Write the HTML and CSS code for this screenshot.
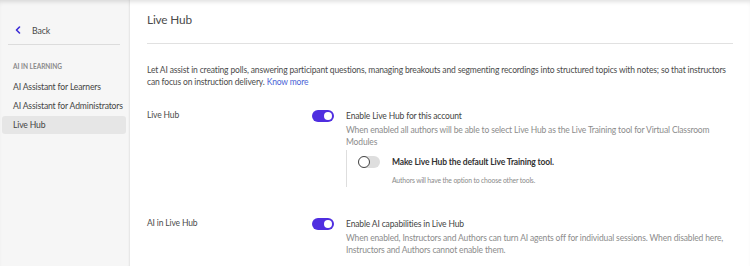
FILE: index.html
```html
<!DOCTYPE html>
<html>
<head lang="en">
<meta charset="UTF-8">
<title>Live Hub</title>
<link rel="stylesheet" href="styles.css">
</head>
<body>
<div class="layout">
  <div class="sidebar">
    <a class="back" href="#">
      <svg width="8" height="8" viewBox="0 0 8 8"><path d="M5.5 1 L2.5 4 L5.5 7" fill="none" stroke="#3b2bd6" stroke-width="1.6" stroke-linecap="round" stroke-linejoin="round"/></svg>
      <span>Back</span>
    </a>
    <div class="side-rule"></div>
    <div class="side-title">AI IN LEARNING</div>
    <ul class="side-list">
      <li>AI Assistant for Learners</li>
      <li>AI Assistant for Administrators</li>
      <li class="active">Live Hub</li>
    </ul>
  </div>

  <div class="main">
    <h1>Live Hub</h1>
    <hr>
    <p class="intro">Let AI assist in creating polls, answering participant questions, managing breakouts and segmenting recordings into structured topics with notes; so that instructors can focus on instruction delivery. <a href="#">Know more</a></p>

    <div class="setting">
      <div class="label">Live Hub</div>
      <div><span class="toggle on"></span></div>
      <div class="body">
        <div class="title">Enable Live Hub for this account</div>
        <div class="desc">When enabled all authors will be able to select Live Hub as the Live Training tool for Virtual Classroom Modules</div>
        <div class="sub">
          <div class="sub-row">
            <span class="toggle off"></span>
            <span class="sub-title">Make Live Hub the default Live Training tool.</span>
          </div>
          <div class="sub-desc">Authors will have the option to choose other tools.</div>
        </div>
      </div>
    </div>

    <div class="setting second">
      <div class="label">AI in Live Hub</div>
      <div><span class="toggle on"></span></div>
      <div class="body">
        <div class="title">Enable AI capabilities in Live Hub</div>
        <div class="desc">When enabled, Instructors and Authors can turn AI agents off for individual sessions. When disabled here, Instructors and Authors cannot enable them.</div>
      </div>
    </div>
  </div>
</div>
</body>
</html>
```

FILE: styles.css
```css
body {
  margin: 0;
  font-family: "Lato", "Noto Sans", sans-serif;
  letter-spacing: -0.15px;
  color: #4b4b4b;
  height: 266px;
  overflow: hidden;
}

.layout {
  display: flex;
  height: 266px;
  box-shadow: inset 0 4px 4px -2px rgba(0, 0, 0, 0.12);
}

.sidebar {
  width: 130px;
  flex-shrink: 0;
  background-color: #f6f6f6;
  box-shadow: inset -2px 0 2px -1px rgba(0, 0, 0, 0.06), inset 0 4px 4px -2px rgba(0, 0, 0, 0.12);
  padding-top: 24px;
  box-sizing: border-box;
}

.back {
  display: flex;
  align-items: center;
  padding-left: 14px;
  height: 12px;
  text-decoration: none;
  color: #4b4b4b;
  font-size: 8.8px;
}

.back span {
  margin-left: 10px;
}

.side-rule {
  height: 1px;
  background-color: #dcdcdc;
  margin: 8px 10px 0 8px;
}

.side-title {
  margin: 18px 0 0 13px;
  font-size: 6.5px;
  font-weight: bold;
  color: #8a8a8a;
  letter-spacing: 0;
}

.side-list {
  list-style-type: none;
  margin: 8px 0 0 0;
  padding: 0;
}

.side-list li {
  font-size: 8.6px;
  color: #444;
  height: 18px;
  line-height: 18px;
  padding-left: 11px;
  margin: 0 4px 1px 2px;
}

.side-list li.active {
  background-color: #e6e6e6;
  border-radius: 3px;
}

.main {
  flex: 1;
  padding: 12px 17px 0 17px;
}

.main h1 {
  margin: 0;
  font-size: 11.8px;
  font-weight: normal;
  line-height: 16px;
  color: #4b4b4b;
}

.main hr {
  border: none;
  height: 1px;
  background-color: #e1e1e1;
  margin: 15px 0 0 0;
}

.intro {
  margin: 20px 0 0 0;
  font-size: 8.5px;
  line-height: 12px;
  color: #4b4b4b;
}

.intro a {
  color: #4a63d6;
  text-decoration: none;
}

.setting {
  display: grid;
  grid-template-columns: 165px 34px 1fr;
  margin-top: 22px;
  font-size: 8.5px;
}

.setting.second {
  margin-top: 31px;
}

.label {
  color: #4b4b4b;
  line-height: 12px;
  margin-top: -1px;
}

.toggle {
  display: block;
  position: relative;
  width: 22px;
  height: 12px;
  border-radius: 6px;
  box-sizing: border-box;
}

.toggle.on {
  background-color: #4f2ee0;
}

.toggle.on::after {
  content: "";
  position: absolute;
  right: 2px;
  top: 2px;
  width: 8px;
  height: 8px;
  border-radius: 50%;
  background-color: #fff;
}

.toggle.off {
  background-color: #dedede;
}

.toggle.off::after {
  content: "";
  position: absolute;
  left: 0;
  top: 0;
  width: 12px;
  height: 12px;
  border-radius: 50%;
  box-sizing: border-box;
  border: 1.5px solid #444;
  background-color: #fff;
}

.title {
  color: #444;
  line-height: 12px;
}

.desc {
  color: #8c8c8c;
  line-height: 12px;
  margin-top: 2px;
}

.sub {
  border-left: 1px solid #dedede;
  margin-top: 2px;
  padding: 6px 0 3px 11px;
}

.sub-row {
  display: flex;
  align-items: center;
}

.sub-title {
  margin-left: 12px;
  font-weight: bold;
  color: #333;
}

.sub-desc {
  margin: 8px 0 0 34px;
  font-size: 6.8px;
  color: #8a8a8a;
}
```
